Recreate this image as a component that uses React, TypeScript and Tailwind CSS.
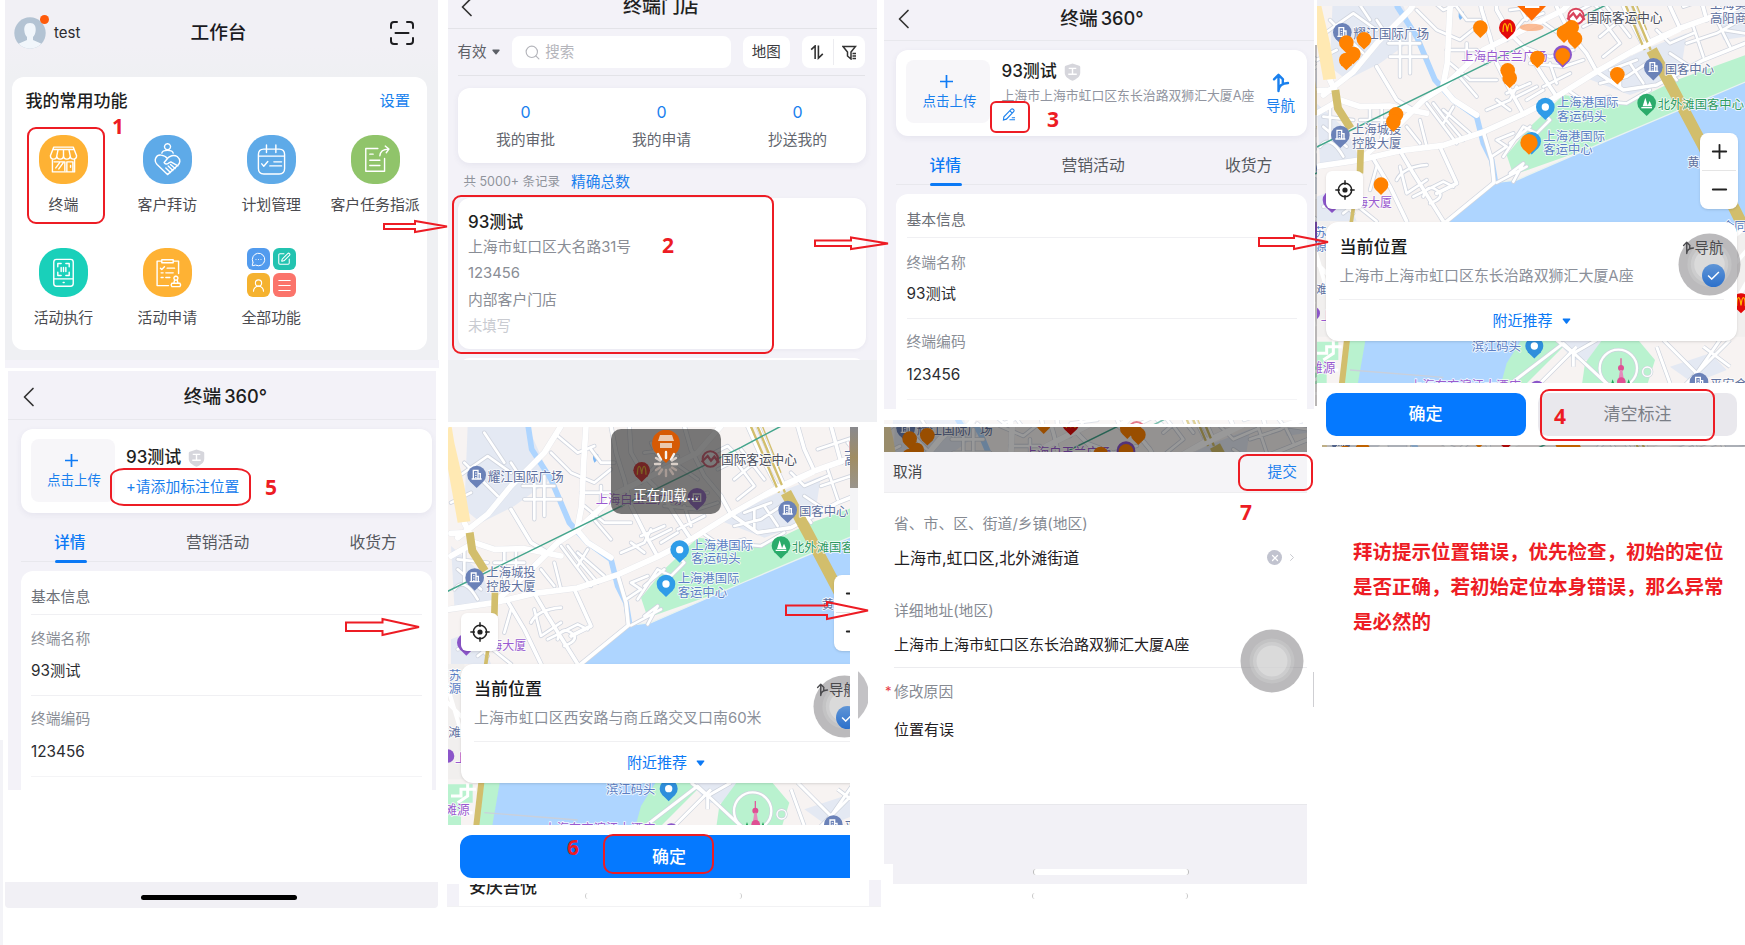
import React from "react";
import { ChevronLeft, ChevronRight, MessageCircleMore, Menu, Plus, Minus, Search, SquarePen, UserRound, X } from "lucide-react";

const FONT = "font-['Inter','Noto_Sans_CJK_SC',sans-serif]";

/* ---------- shared glyphs ---------- */

function NavGlyph({ className }: { className: string }) {
  return (
    <svg viewBox="0 0 18 20" fill="none" stroke="currentColor" strokeLinecap="round" strokeLinejoin="round" className={className}>
      <path d="M6.500 18V2M2 6.300L6.500 1.800L11 6.300M6.500 17.500C6.800 13 9.500 10.300 16 10M10.800 7.500V10.500" />
    </svg>
  );
}

function Shield({ className }: { className: string }) {
  return (
    <svg viewBox="0 0 18 20" preserveAspectRatio="none" className={className}>
      <path d="M9 0.5L16.2 3Q17.2 3.4 17.2 4.5V11C17.2 15 13 18 9 19.6C5 18 .8 15 .8 11V4.5Q.8 3.4 1.8 3Z" fill="#d6d6dc" />
      <path d="M5 6H13M9 6V12.5M4.5 12.5H13.5" stroke="#fff" strokeWidth="1.5" fill="none" />
    </svg>
  );
}

function Caret({ className }: { className: string }) {
  return (
    <svg viewBox="0 0 10 7" className={className}>
      <path d="M1 .5H9Q10 .8 9.3 1.8L5.7 6.3Q5 7 4.3 6.3L.7 1.8Q0 .8 1 .5Z" fill="currentColor" />
    </svg>
  );
}

function Back() {
  return (
    <svg viewBox="0 0 22 22" fill="none" stroke="#333" strokeWidth="1.7" strokeLinecap="round" strokeLinejoin="round" className="h-[22px] w-[22px]">
      <path d="M16 2.500L7.500 11L16 19.500" />
    </svg>
  );
}

function Assistive({ className }: { className: string }) {
  return (
    <svg viewBox="0 0 64 64" className={className}>
      <circle cx="32" cy="32" r="31.5" fill="#8a888c" fillOpacity=".58" />
      <circle cx="32" cy="32" r="22.5" fill="#fff" fillOpacity=".13" />
      <circle cx="32" cy="32" r="19" fill="#fff" fillOpacity=".18" />
      <circle cx="32" cy="32" r="15.5" fill="#fff" fillOpacity=".26" />
    </svg>
  );
}

/* ---------- map ---------- */

const MAJOR = [
  "M0 502L150 480L270 452L400 436L520 396L640 342L740 290L860 215L1000 135L1110 85L1305 15",
  "M40 285L130 215L200 130L300 30L350 -50",
  "M150 480L250 390L340 300L398 262L412 190L418 60L425 -50",
  "M60 240L75 270L20 272",
  "M500 345L430 300L398 262L520 150L640 90L760 30L830 -50",
  "M20 340L90 300L150 320L240 318L350 340",
];
const MID = [
  "M640 342L600 270L560 190L540 110L515 30L500 -50",
  "M740 290L700 230L650 150L600 100L560 30L555 -50",
  "M520 396L545 480L552 548L410 664L300 760",
  "M200 200L260 300L310 330",
  "M270 452L310 520L360 600L400 664",
  "M190 476L240 560L290 664",
  "M390 440L440 550L380 580",
  "M860 215L830 160L780 100L740 20L720 -50",
  "M1000 135L950 40L910 -50M1020 130L975 30L940 -50",
  "M1305 130L1180 180L1040 255L940 270L860 215",
  "M1110 85L1080 20L1060 -50M1190 60L1160 -50",
];
const MINOR = [
  "M270 120V230M300 100V220M235 130H330M240 170H350M200 60L240 120",
  "M320 30L380 90L450 120L500 80M440 20L470 60L510 60M340 -20L400 30L450 10",
  "M410 150H500L530 190M420 190L480 240L560 240M440 220L500 290M470 130V200",
  "M330 360L350 440M290 380L330 430M370 310L400 350L460 420M400 330L480 400M430 320L400 370M350 310L440 430",
  "M560 300L600 330M530 330L600 300L620 260M590 280L660 250M620 290L680 260M650 300L700 270",
  "M545 470L590 440L560 420L610 400M580 470L640 380L680 400L720 360L690 330M600 430L660 380",
  "M600 520L640 490L610 545M560 548L650 500",
  "M260 540Q280 500 350 495M270 500L290 580L350 540M310 590L400 545L430 560M340 590Q350 550 380 570T360 610",
  "M60 560L130 640M40 620L120 600L200 664M200 500L180 570",
  "M40 350L130 360M40 380L110 440M60 320V420M180 320V450M215 320V420M150 360H240",
  "M640 140L720 170L790 150M660 190L760 200L820 180M690 60L760 110M590 120L640 60L700 40M700 260L780 220M720 190L740 250",
  "M870 50L930 130L880 170M890 20L960 110M930 60L870 110M960 190L1000 250M900 210L980 180M870 250L950 230L1010 190M930 260V200M1060 190L1100 240M1080 160L1140 200",
  "M1040 90L1080 130L1150 100M1150 80L1180 170M1120 20L1240 -20M1220 60L1260 140M1130 130L1220 100L1290 60M1210 0L1250 50M1240 90L1305 100",
  "M60 60L160 160M30 110L130 40L200 90M120 -30L180 60M20 180L80 150",
  "M100 470Q60 400 30 440M100 640L150 600",
  "M780 275L830 310L900 290M830 300L950 310L1020 270",
  "M790 40L850 10L900 60M820 80L880 50M600 30L680 20M620 0L650 60",
];

type LabelProps = { x: number; y: number; fill: string; children: string; size?: number };
function Label({ x, y, fill, children, size = 37 }: LabelProps) {
  return (
    <text x={x} y={y} fill={fill} fontSize={size} stroke="#fff" strokeWidth="5" strokeOpacity=".85" paintOrder="stroke" strokeLinejoin="round">
      {children}
    </text>
  );
}

function Drop({ x, y, r, fill, children }: { x: number; y: number; r: number; fill: string; children?: React.ReactNode }) {
  return (
    <g transform={`translate(${x} ${y})`}>
      <path d={`M0 ${r * 1.4}L${-r * 0.75} ${r * 0.66}H${r * 0.75}Z`} fill={fill} />
      <circle r={r} fill={fill} />
      {children}
    </g>
  );
}

function BuildingPin({ x, y }: { x: number; y: number }) {
  return (
    <Drop x={x} y={y} r={28} fill="#6b82b8">
      <path d="M-10 12V-14H4V12M4 -4H11V12M-15 12H15" fill="none" stroke="#fff" strokeWidth="4" />
      <path d="M-5 -6H0M-5 1H0M-5 8H0" stroke="#fff" strokeWidth="3" />
    </Drop>
  );
}

function McPin({ x, y }: { x: number; y: number }) {
  return (
    <Drop x={x} y={y} r={25} fill="#e30a0a">
      <path d="M-13 13C-12 -20 -4 -20 0 11C4 -20 12 -20 13 13" fill="none" stroke="#ffb400" strokeWidth="4" />
    </Drop>
  );
}

const ORANGE_PINS: [number, number][] = [
  [511, 83], [162, 118], [130, 162], [109, 128], [109, 180], [593, 211], [599, 234], [682, 174],
  [922, 223], [258, 343], [250, 365], [213, 554], [785, 82], [795, 116], [762, 98], [775, 90], [758, 166],
];

const BLUE = "#5b7fc4";
const SLATE = "#5f719f";
const PURPLE = "#9a5bd0";

function Labels() {
  return (
    <g>
      <Label x={130} y={115} fill={SLATE} size={38}>耀江国际广场</Label>
      <Label x={126} y={402} fill={SLATE}>上海城投</Label>
      <Label x={126} y={444} fill={SLATE}>控股大厦</Label>
      <Label x={1064} y={221} fill={SLATE}>国客中心</Label>
      <Label x={454} y={183} fill={PURPLE}>上海白玉兰广场</Label>
      <Label x={830} y={65} fill="#4a4f5e" size={38}>国际客运中心</Label>
      <Label x={1200} y={28} fill={SLATE}>上海实</Label>
      <Label x={1200} y={68} fill={SLATE}>高阳商</Label>
      <Label x={741} y={321} fill={BLUE}>上海港国际</Label>
      <Label x={741} y={362} fill={BLUE}>客运码头</Label>
      <Label x={700} y={422} fill={BLUE}>上海港国际</Label>
      <Label x={700} y={463} fill={BLUE}>客运中心</Label>
      <Label x={1043} y={328} fill="#2d9a62">北外滩国客中心</Label>
      <Label x={1132} y={500} fill={SLATE}>黄</Label>
      <Label x={138} y={622} fill={PURPLE} size={36}>海大厦</Label>
      <Label x={-24} y={712} fill={BLUE}>嘉苏</Label>
      <Label x={-24} y={752} fill={BLUE}>滩源</Label>
      <Label x={12} y={882} fill={SLATE}>滩</Label>
      <Label x={32} y={962} fill={PURPLE}>上</Label>
      <Label x={1236} y={692} fill={BLUE}>合同</Label>
      <Label x={0} y={1115} fill={PURPLE} size={38}>滩源</Label>
      <Label x={485} y={1053} fill={BLUE}>滨江码头</Label>
      <Label x={300} y={1170} fill={PURPLE}>上海东方滨江大酒店</Label>
      <Label x={1200} y={1166} fill={SLATE}>平安金</Label>
    </g>
  );
}

function CityMap({ viewBox, className, pins = false, labels = true }: { viewBox: string; className: string; pins?: boolean; labels?: boolean }) {
  return (
    <svg viewBox={viewBox} preserveAspectRatio="none" className={className}>
      <rect x="-50" y="-100" width="1500" height="1400" fill="#f7f3f2" />
      <g fill="#e4e9f3">
        <path d="M70 -50H250L320 110L210 190L110 240L60 200Z" />
        <path d="M830 235L1000 150L1130 100L1110 230L960 285Z" />
        <path d="M20 310L110 390L150 480L30 490Z" />
        <path d="M20 590L100 560L140 664H20ZM1210 40L1305 20V110L1240 120Z" />
      </g>
      <path d="M590 465L660 380L760 285L800 290L950 312L1100 240L1320 160V260L880 430L610 525Z" fill="#b9f2cf" />
      <path d="M250 -60L262 20L320 110L375 240L430 300L500 350L520 430L545 480L560 570" fill="none" stroke="#aed5ff" strokeWidth="17" />
      <path d="M400 670L552 548L620 540L900 418L1320 240V1023H400Z" fill="#aed5ff" />
      <path d="M552 548L620 540L900 418L1320 240" fill="none" stroke="#e9f3f0" strokeWidth="4" />
      <path d="M446 38Q454 30 462 36Q462 52 450 60Q444 50 446 38Z" fill="#7db8f5" />
      <g fill="none" strokeLinejoin="round" strokeLinecap="round">
        <g stroke="#d0d5df">
          {MINOR.map((d) => <path key={d} d={d} strokeWidth="13" />)}
          {MID.map((d) => <path key={d} d={d} strokeWidth="15" />)}
          {MAJOR.map((d) => <path key={d} d={d} strokeWidth="19" strokeOpacity=".5" />)}
        </g>
        <g stroke="#fff">
          {MINOR.map((d) => <path key={d} d={d} strokeWidth="8" />)}
          {MID.map((d) => <path key={d} d={d} strokeWidth="11" />)}
          {MAJOR.map((d) => <path key={d} d={d} strokeWidth="17" />)}
        </g>
      </g>
      <path d="M20 -60L-5 -10L40 240L78 236L60 130L30 0Z" fill="#ffe9b3" />
      <g fill="none" stroke="#d2be6c">
        <path d="M76 270L84 325L122 385" strokeWidth="24" />
        <path d="M152 445L150 520" strokeWidth="20" />
        <path d="M132 610L122 680" strokeWidth="11" />
        <path d="M1025 150L1090 270L1175 430L1300 680" strokeWidth="34" />
        <path d="M915 -60L1004 150M935 -60L1022 150" strokeWidth="7" />
        <path d="M950 -60L1010 90" strokeWidth="4" />
      </g>
      <path d="M960 160L1110 88" stroke="#fff" strokeWidth="14" />
      <path d="M10 446L890 14L1030 -60" fill="none" stroke="#43a58c" strokeWidth="4.5" />

      {/* south bank */}
      <path d="M0 664H60V1023H0ZM1240 670H1320V1150H1240Z" fill="#f1efee" />
      <path d="M0 770L60 830M0 700L60 900M1260 720L1320 670M1250 820L1320 740M1250 950L1320 830" stroke="#fff" strokeWidth="12" />
      <rect x="0" y="1010" width="1320" height="190" fill="#f7f3f2" />
      <path d="M150 1010H700L560 1200H120Z" fill="#aed5ff" />
      <path d="M0 1025H85V1080H50V1160H0Z" fill="#b9f2cf" />
      <path d="M20 1060H50V1040H95M20 1110H85M70 1020V1060L40 1080" stroke="#fff" strokeWidth="9" fill="none" />
      <path d="M110 1010H168L135 1200H90Z" fill="#b9f2cf" />
      <path d="M112 1010L90 1200" stroke="#d2be6c" strokeWidth="18" />
      <path d="M120 1110L400 1132" stroke="#c9d0dc" strokeWidth="4" />
      <path d="M560 1200L590 1090L640 1010H790L600 1200Z" fill="#b9f2cf" />
      <path d="M730 1010H900L850 1080H790ZM1080 1100L1200 1060L1250 1110L1150 1150Z" fill="#e4e9f3" />
      <path d="M815 1160L825 1090L880 1015H980L1035 1080L1010 1160Z" fill="#b9f2cf" />
      <g fill="none" strokeLinejoin="round">
        <g stroke="#cdd3dd">
          <path d="M590 1160L760 1030L900 1160M680 1160L800 1040M740 1020L790 1060L860 1020M790 1060V1100M1040 1040L1080 1150M1060 1020L1160 1120L1230 1020M1120 1160L1260 1020M1180 1040L1260 1100" strokeWidth="13" />
          <circle cx="925" cy="1105" r="56" strokeWidth="11" />
          <circle cx="1012" cy="1115" r="14" strokeWidth="8" />
        </g>
        <g stroke="#fff">
          <path d="M590 1160L760 1030L900 1160M680 1160L800 1040M740 1020L790 1060L860 1020M790 1060V1100M1040 1040L1080 1150M1060 1020L1160 1120L1230 1020M1120 1160L1260 1020M1180 1040L1260 1100" strokeWidth="9" />
          <circle cx="925" cy="1105" r="56" strokeWidth="7" />
          <circle cx="1012" cy="1115" r="14" strokeWidth="4" />
        </g>
      </g>
      <path d="M933 1075V1110" stroke="#e05c9d" strokeWidth="4" />
      <circle cx="933" cy="1104" r="9" fill="#df4f93" />
      <path d="M930 1110H937L941 1135H926Z" fill="#e58abb" />
      <circle cx="934" cy="1145" r="13" fill="#df4f93" />
      <path d="M900 1160L908 1138L916 1160M948 1160L956 1138L964 1160" fill="#22a35a" />

      <BuildingPin x={97} y={97} />
      <BuildingPin x={91} y={405} />
      <BuildingPin x={1030} y={202} />
      <BuildingPin x={1167} y={1146} />
      <circle cx="798" cy="49" r="23" fill="#fff" stroke="#d9435c" strokeWidth="6" />
      <path d="M772 58L790 40L800 54L810 42L824 60" fill="none" stroke="#d9435c" strokeWidth="7" />
      {labels && <Labels />}
      <Drop x={706} y={321} r={28} fill="#2f9ce8"><circle r="11" fill="#fff" /></Drop>
      <Drop x={665} y={424} r={28} fill="#2f9ce8"><circle r="11" fill="#fff" /></Drop>
      <Drop x={1010} y={309} r={28} fill="#2bab6b">
        <path d="M-12 10L-4 -16L4 10ZM2 10L9 -6L16 10Z" fill="#fff" />
        <path d="M-16 14H16" stroke="#fff" strokeWidth="4" />
      </Drop>
      <Drop x={758} y={164} r={28} fill="#8b55c9">
        <path d="M-11 -10H11V12H-11ZM-5 -4Q0 6 5 -4" fill="none" stroke="#fff" strokeWidth="4" />
      </Drop>
      <Drop x={66} y={600} r={28} fill="#8b55c9" />
      <circle cx="10" cy="940" r="20" fill="#8b55c9" />
      <Drop x={673} y={1038} r={27} fill="#2f8fdc"><circle r="11" fill="#fff" /></Drop>
      <circle cx="681" cy="1164" r="22" fill="#8b55c9" />
      <McPin x={592} y={83} />

      {pins && (
        <g>
          <ellipse cx="665" cy="82" rx="36" ry="11" fill="#f9a06a" fillOpacity=".7" />
          <path d="M665 62L622 18Q610 0 625 -20H705Q720 0 708 18Z" fill="#ff6a00" />
          <path d="M645 10H688V24H645Z" fill="#fff" />
          {ORANGE_PINS.map(([x, y]) => <Drop key={`${x}-${y}`} x={x} y={y} r={22} fill="#ff8200" />)}
          <Drop x={657} y={428} r={26} fill="#ff8200" />
          <McPin x={1293} y={905} />
        </g>
      )}
    </svg>
  );
}

function LocateButton({ className }: { className: string }) {
  return (
    <div className={`absolute flex h-[38px] w-[37px] items-center justify-center rounded-md bg-white text-[#222] shadow-sm ${className}`}>
      <svg viewBox="0 0 20 20" fill="none" stroke="currentColor" strokeWidth="1.5" className="h-5 w-5">
        <circle cx="10" cy="10" r="6.7" />
        <circle cx="10" cy="10" r="2.6" fill="currentColor" stroke="none" />
        <path d="M10 .3V5M10 15v4.7M.3 10H5M15 10h4.7" />
      </svg>
    </div>
  );
}

function ZoomControl({ className }: { className: string }) {
  return (
    <div className={`absolute flex h-[76px] w-[38px] flex-col items-center rounded-lg bg-white text-[#222] shadow ${className}`}>
      <div className="flex h-[37px] items-center"><Plus className="h-[23px] w-[23px]" strokeWidth={1.9} /></div>
      <div className="h-px w-[34px] bg-[#e5e5e5]" />
      <div className="flex h-[37px] items-center"><Minus className="h-[23px] w-[23px]" strokeWidth={1.9} /></div>
    </div>
  );
}

function LocationCard({ address, className }: { address: string; className: string }) {
  return (
    <div className={`absolute h-[119px] w-[411px] rounded-xl bg-white shadow ${className}`}>
      <Assistive className="absolute top-[11px] right-[-4px] h-[63px] w-[63px]" />
      <div className="relative flex h-[52px] items-center justify-between px-[13.5px]">
        <span className="text-[17px] font-medium text-[#17181a]">当前位置</span>
        <span className="flex items-center text-[14.5px] text-[#4a4a4d]">
          <NavGlyph className="h-[14px] w-[13px] stroke-2" />导航
        </span>
      </div>
      <div className="flex h-[5px] items-center px-[13.5px] text-[14.95px] whitespace-nowrap text-[#8b909a]">{address}</div>
      <div className="mx-[13px] mt-[20px] h-px bg-[#f0f0f2]" />
      <div className="flex h-[43px] items-center justify-center gap-[9px] text-[15px] text-[#0b79f5]">
        附近推荐<Caret className="h-[6px] w-[9px]" />
      </div>
      <div className="absolute top-[42px] right-[12.5px] flex h-[23px] w-[23px] items-center justify-center rounded-full bg-linear-to-b from-[#5f95d6] to-[#2b70cb]">
        <svg viewBox="0 0 14 10" fill="none" stroke="#fff" strokeWidth="1.6" className="h-[9px] w-[13px]"><path d="M1 5L5 9L13 1" /></svg>
      </div>
    </div>
  );
}

/* ---------- workbench ---------- */

const ART: Record<string, React.ReactNode> = {
  store: <path d="M34 62L44 36H102L112 62M44 43H102M57 43L53 62M73 43V62M89 43L93 62M34 62c0 13 19 13 19 0c0 13 20 13 20 0c0 13 20 13 20 0c0 13 19 13 19 0M40 74V110H106V74M83 110V80H101V110M50 98l11-15M59 101l13-18M94 91v5M45 80H77V106" />,
  shake: <path d="M73 26a9 9 0 1 0 .1 0M56 54c2-11 32-11 34 0M73 118L42 88C30 74 40 58 54 60C64 61 70 66 73 70C78 62 92 58 102 64C114 74 110 84 104 90ZM73 70L63 82q5 8 13 2l7-4L104 92M68 98l14 14M75 92l14 14M82 88l14 12" />,
  plan: <path d="M50 42H96Q112 42 112 58V100Q112 116 96 116H50Q34 116 34 100V58Q34 42 50 42ZM34 63H112M58 30V52M86 30V52M44 86l6 7L62 79M80 80H103M68 92H103" />,
  assign: <path d="M80 40H44V108H100V70M56 57H66M56 75H86M56 91H86M86 62C87 50 94 42 112 42M102 33L113 42L105 53" />,
  phone: <path d="M52 34H94Q102 34 102 42V106Q102 114 94 114H52Q44 114 44 106V42Q44 34 52 34ZM44 92H102M56 56V46H66M80 46H90V56M90 72V82H80M66 82H56V72M66 58V70M73 58V70M80 58V70M72 103h3" />,
  apply: <path d="M54 39H42V112H76M92 39H106V76M56 35H90V44H56ZM52 60l4 4l8-8M72 60H94M54 74H60M68 74H90M54 88H60M68 88H80M98 84a6 6 0 1 0 .1 0M94 96L92 104M102 96L104 104M86 105H110Q114 110 110 115H86Q82 110 86 105Z" />,
};

function AppIcon({ art, bg }: { art: string; bg: string }) {
  return (
    <div className={`h-[49px] w-[49px] rounded-[22px] ${bg}`}>
      <svg viewBox="0 0 146 146" fill="none" stroke="#fff" strokeWidth="4.2" strokeLinecap="round" strokeLinejoin="round">{ART[art]}</svg>
    </div>
  );
}

function AllIcon() {
  const cell = "flex items-center justify-center rounded-[6px] text-white";
  return (
    <div className="grid h-[49px] w-[49px] grid-cols-2 gap-[3px]">
      <div className={`${cell} bg-[#529bee]`}><MessageCircleMore className="h-[15px] w-[15px]" strokeWidth={1.6} /></div>
      <div className={`${cell} bg-[#23c3b0]`}><SquarePen className="h-[14px] w-[14px]" strokeWidth={1.8} /></div>
      <div className={`${cell} bg-[#f5b22f]`}><UserRound className="h-[15px] w-[15px]" strokeWidth={1.8} /></div>
      <div className={`${cell} bg-[#fb746b]`}><Menu className="h-[17px] w-[17px]" strokeWidth={1.6} /></div>
    </div>
  );
}

const APPS = [
  { label: "终端", icon: <AppIcon art="store" bg="bg-[#feb234]" /> },
  { label: "客户拜访", icon: <AppIcon art="shake" bg="bg-[#5eaae8]" /> },
  { label: "计划管理", icon: <AppIcon art="plan" bg="bg-[#5eaae8]" /> },
  { label: "客户任务指派", icon: <AppIcon art="assign" bg="bg-[#90c46a]" /> },
  { label: "活动执行", icon: <AppIcon art="phone" bg="bg-[#19d0ba]" /> },
  { label: "活动申请", icon: <AppIcon art="apply" bg="bg-[#feb234]" /> },
  { label: "全部功能", icon: <AllIcon /> },
];

function Workbench() {
  return (
    <section className="ml-[5px] h-[360px] w-[433px] bg-[#eff0f3]">
      <header className="grid h-[77px] grid-cols-3 items-start bg-linear-to-b from-[#f1f0f5] from-60% to-[#eff0f3] px-[9px] pt-[11px]">
        <div className="flex h-11 items-center gap-[8px]">
          <div className="relative">
            <svg viewBox="0 0 32 32" className="h-8 w-8">
              <defs><clipPath id="avatar"><circle cx="16" cy="16" r="15.7" /></clipPath></defs>
              <g clipPath="url(#avatar)">
                <rect width="32" height="32" fill="#b3c3d3" />
                <path d="M16 6C11.5 6 10 9.5 10.3 13.5C10.5 17 12 19 13 20V23L5 26.500V32H27V26.500L19 23V20C20 19 21.5 17 21.700 13.500C22 9.500 20.500 6 16 6Z" fill="#f1f6fb" />
              </g>
            </svg>
            <div className="absolute -top-[2px] -right-[3px] h-[9px] w-[9px] rounded-full bg-[#ff5b0b]" />
          </div>
          <span className="pt-px text-[15px] text-[#2b2b2f]">test</span>
        </div>
        <h1 className="flex h-11 items-center justify-center pt-px pr-[6px] text-[18.7px] font-medium text-[#1a1a1e]">工作台</h1>
        <div className="flex h-11 items-center justify-end pr-[15px]">
          <svg viewBox="0 0 24 24" fill="none" stroke="#1d1d20" strokeWidth="2" strokeLinecap="round" className="h-6 w-6">
            <path d="M1 7V4Q1 1 4 1H7M17 1H20Q23 1 23 4V7M23 17V20Q23 23 20 23H17M7 23H4Q1 23 1 20V17M5.500 12H18.500" />
          </svg>
        </div>
      </header>
      <div className="ml-[7px] h-[273px] w-[415px] rounded-xl bg-white">
        <div className="flex h-[48px] items-center justify-between pt-px pr-[17px] pl-[13.5px]">
          <h2 className="text-[17px] font-medium text-[#1d1e21]">我的常用功能</h2>
          <a className="text-[15.3px] text-[#1681ee]">设置</a>
        </div>
        <div className="-ml-[0.5px] grid grid-cols-4 pt-[10px]">
          {APPS.map((a) => (
            <div key={a.label} className="flex h-[113px] flex-col items-center">
              {a.icon}
              <span className="mt-[10px] text-[14.9px] leading-[23px] whitespace-nowrap text-[#4b4b50]">{a.label}</span>
            </div>
          ))}
        </div>
      </div>
    </section>
  );
}

/* ---------- store list ---------- */

function StoreList() {
  return (
    <section className="ml-[0.5px] flex h-[422px] w-[429px] flex-col bg-[#eff0f3]">
      <div className="h-[360px] overflow-hidden bg-[#f3f2f8]">
        <header className="relative h-[29px] overflow-hidden border-b border-[#e3e3e8]">
          <div className="-mt-[8px] grid h-[29px] grid-cols-3 items-center pr-[9px] pl-[7px]">
            <Back />
            <h1 className="text-center text-[19px] leading-none font-medium whitespace-nowrap text-[#222]">终端门店</h1>
          </div>
        </header>
        <div className="mr-[12px] ml-[10px] flex h-[47px] items-center border-b border-[#e3e3e8]">
          <div className="flex w-[55px] items-center gap-[5px] text-[14.5px] whitespace-nowrap text-[#5d6067]">有效<Caret className="h-[6px] w-[8px]" /></div>
          <div className="flex h-8 w-[219px] items-center gap-[4px] rounded-lg bg-white pl-[12px] text-[14.5px] text-[#b4b5bb]">
            <Search className="h-[17px] w-[17px]" strokeWidth={1.6} />搜索
          </div>
          <div className="ml-[12px] flex h-8 w-[47px] items-center justify-center rounded-lg bg-white text-[14.5px] text-[#3b3c40]">地图</div>
          <div className="ml-[12px] flex h-8 w-[63px] items-center rounded-lg bg-white text-[#333]">
            <div className="flex flex-1 justify-center">
              <svg viewBox="0 0 14 16" fill="none" stroke="currentColor" strokeWidth="1.7" className="h-[15px] w-[14px]">
                <path d="M.8 5L5 1V15M8.500 .5V14L13.200 9.500" />
              </svg>
            </div>
            <div className="h-[26px] w-px bg-[#ececf0]" />
            <div className="flex flex-1 justify-center">
              <svg viewBox="0 0 15 15" fill="none" stroke="currentColor" strokeWidth="1.5" className="h-[15px] w-[15px]">
                <path d="M1 1.500H13.500L9 7V14L5.500 11V7ZM10.500 8.500H14M10.500 11H14M10.500 13.500H14" />
              </svg>
            </div>
          </div>
        </div>
        <div className="mt-[12px] ml-[10px] grid h-[75px] w-[408px] grid-cols-3 rounded-xl bg-white shadow-[0_2px_6px_rgba(60,60,120,0.07)]">
          {["我的审批", "我的申请", "抄送我的"].map((t) => (
            <div key={t} className="flex flex-col items-center pt-[11px]">
              <span className="text-[16px] leading-[26px] text-[#1a80ee]">0</span>
              <span className="mt-[3px] text-[14.8px] leading-[24px] text-[#62666e]">{t}</span>
            </div>
          ))}
        </div>
        <div className="flex h-[35px] items-center gap-[11px] pt-[3px] pl-[16px]">
          <span className="text-[12.5px] text-[#90949c]">共 5000+ 条记录</span>
          <a className="text-[14.7px] text-[#1a80ee]">精确总数</a>
        </div>
        <article className="ml-[10px] flex h-[151px] w-[408px] flex-col rounded-xl bg-white pl-[10.500px] text-[14.8px] text-[#898d95] shadow-[0_1px_4px_rgba(60,60,120,0.06)]">
          <h2 className="mt-[12px] text-[17px] leading-[25px] font-medium text-[#1d1e21]">93测试</h2>
          <p className="-mt-px leading-[26px]">上海市虹口区大名路31号</p>
          <p className="leading-[27px]">123456</p>
          <p className="leading-[26px]">内部客户门店</p>
          <p className="leading-[26px] text-[14.3px] text-[#c9cbd1]">未填写</p>
        </article>
        <div className="mt-[9px] ml-[10px] h-4 w-[408px] rounded-t-xl bg-white" />
      </div>
    </section>
  );
}

/* ---------- terminal detail ---------- */

type DetailCls = { root: string; header: string; card: string; title: string; indent: string };

function Detail({ c, children, nav }: { c: DetailCls; children: React.ReactNode; nav?: boolean }) {
  return (
    <section className={`overflow-hidden bg-[#f3f2f8] ${c.root}`}>
      <header className={`grid grid-cols-3 items-center border-b border-[#e8e8ed] pr-[2px] ${c.header}`}>
        <Back />
        <h1 className="text-center text-[18.7px] font-medium whitespace-nowrap text-[#1d1e21]">终端<span className="ml-[3px] text-[18.2px]">360°</span></h1>
      </header>
      <div className={`flex w-[411px] rounded-xl bg-white pl-[10px] shadow-[0_2px_6px_rgba(60,60,120,0.07)] ${c.card} ${c.indent}`}>
        <div className="mt-[10px] flex h-[63px] w-[84px] shrink-0 flex-col items-center rounded-lg bg-[#f7f6f9] pt-[15px] pr-[4px] pl-px text-[13.5px] text-[#1a80ee]">
          <svg viewBox="0 0 13 13" className="h-[13px] w-[13px]" stroke="#0f7bf5" strokeWidth="1.7"><path d="M6.500 0V13M0 6.500H13" /></svg>
          <span className="mt-[2px] ml-[6px] leading-[22px]">点击上传</span>
        </div>
        <div className={`ml-[11.5px] flex w-[256px] flex-col ${c.title}`}>
          <div className="flex h-[24px] items-center gap-[7px] text-[17px] font-medium text-[#1d1e21]">93测试<Shield className="h-[18px] w-[17px]" /></div>
          {children}
        </div>
        {nav && (
          <div className="ml-[3px] flex w-[40px] flex-col items-center pt-[23px] text-[14.5px] text-[#1a80ee]">
            <NavGlyph className="h-[20px] w-[18px] stroke-[2.4]" />
            <span className="mt-[3px] leading-[20px]">导航</span>
          </div>
        )}
      </div>
      <nav className={`relative mt-[16px] h-[33px] w-[411px] border-b border-[#e8e8ed] pt-[2px] text-[15.8px] text-[#55585e] ${c.indent}`}>
        <div className="flex items-center pl-[33.500px]">
          <div className="w-[132px] font-medium text-[#0b79f5]">详情</div>
          <div className="w-[163.500px]">营销活动</div>
          <div>收货方</div>
        </div>
        <div className="absolute -bottom-[2px] left-[34px] h-[3px] w-[32px] rounded-full bg-[#0b79f5]" />
      </nav>
      <div className={`mt-[9px] flex h-[300px] w-[411px] flex-col rounded-t-xl bg-white pr-[10px] pl-[10.5px] text-[14.8px] text-[#8b8f97] ${c.indent}`}>
        <div className="flex h-[44px] items-center border-b border-[#f0f0f3] pt-[10px] text-[#6c7077]">基本信息</div>
        <div className="flex h-[50px] items-center">终端名称</div>
        <div className="flex h-[31px] items-center border-b border-[#f0f0f3] pb-[17px] text-[15.3px] text-[#2b2c30]">93测试</div>
        <div className="flex h-[47px] items-center">终端编码</div>
        <div className="flex h-[34px] items-center border-b border-[#f4f4f6] pb-[14px] text-[15.3px] text-[#2b2c30]">123456</div>
      </div>
    </section>
  );
}

const TOP_DETAIL: DetailCls = {
  root: "h-[409px] w-[430px]",
  header: "h-[41px] pb-[2px] pl-[8px]",
  card: "mt-[9px] h-[86px]",
  title: "pt-[10px]",
  indent: "ml-[12px]",
};

const LOW_DETAIL: DetailCls = {
  root: "ml-[8px] mt-[3px] h-[419px] w-[428px]",
  header: "h-[49px] pt-[4px] pl-[9px]",
  card: "mt-[8.5px] h-[84px]",
  title: "pt-[17px]",
  indent: "ml-[12.5px]",
};

/* ---------- address form ---------- */

function AddressForm() {
  return (
    <section className="w-[423px]">
      <div className="relative h-[25px]">
        <CityMap viewBox="32 93 1269 75" className="h-[25px] w-[423px]" pins />
        <div className="absolute inset-0 bg-black/40" />
      </div>
      <div className="flex h-[41px] items-center justify-between border-b border-[#eeeef0] bg-[#f5f4f7] pr-[10px] pl-[9px] text-[14.7px] text-[#45464a]">
        <span>取消</span><span className="text-[#1a80ee]">提交</span>
      </div>
      <div className="flex h-[311px] flex-col pl-[10px] text-[14.8px] text-[#868a92]">
        <div className="flex h-[62px] items-center">省、市、区、街道/乡镇(地区)</div>
        <div className="flex h-[5px] items-center justify-between pr-[9px] text-[16px] text-[#1f2023]">
          上海市,虹口区,北外滩街道
          <span className="flex items-center gap-[4px]">
            <span className="flex h-[15px] w-[15px] items-center justify-center rounded-full bg-[#c1c3cf] text-white"><X className="h-[10px] w-[10px]" strokeWidth={3} /></span>
            <ChevronRight className="h-[17px] w-[12px] text-[#c3c4cb]" strokeWidth={1.8} />
          </span>
        </div>
        <div className="flex h-[102px] items-center">详细地址(地区)</div>
        <div className="-mt-[34px] flex h-[34px] items-center text-[15px] text-[#1f2023]">上海市上海市虹口区东长治路双狮汇大厦A座</div>
        <div className="mt-[5px] h-px bg-[#ececef]" />
        <div className="-ml-[9px] flex h-[48px] items-center"><span className="w-[9px] text-[13px] text-[#e83b46]">*</span>修改原因</div>
        <div className="flex h-[28px] items-center text-[15px] text-[#1f2023]">位置有误</div>
      </div>
      <div className="flex h-[60px] border-t border-[#e8e8ec] bg-[#f2f1f6]" />
      <div className="ml-[9px] h-[20px] bg-[#f2f1f6] pt-[5px] pl-[140px]">
        <div className="h-[6px] w-[156px] rounded-full border-x border-[#bbb] bg-white" />
      </div>
      <div className="mt-[9px] ml-[148px] h-[6px] w-[156px] rounded-full border-x border-[#c8c8c8]" />
    </section>
  );
}

/* ---------- annotations ---------- */

const BOXES = [
  "left-[27px] top-[127px] h-[97px] w-[78px] rounded-[9px]",
  "left-[452px] top-[195px] h-[159px] w-[322px] rounded-[9px]",
  "left-[990px] top-[101px] h-[32px] w-[40px] rounded-[6px]",
  "left-[1540px] top-[389px] h-[52px] w-[175px] rounded-[9px]",
  "left-[110px] top-[467.5px] h-[38.5px] w-[141px] rounded-[14px/9px]",
  "left-[603px] top-[834px] h-[40px] w-[111px] rounded-[10px]",
  "left-[1238px] top-[454px] h-[37px] w-[75px] rounded-[9px]",
];

const DIGITS = [
  "left-[112px] top-[112px]",
  "left-[662px] top-[231px]",
  "left-[1047px] top-[105px]",
  "left-[1554px] top-[402px]",
  "left-[265px] top-[473px]",
  "left-[567px] top-[833px]",
  "left-[1240px] top-[498px]",
];

function Annotations() {
  return (
    <div className="pointer-events-none absolute inset-0">
      {BOXES.map((b) => <div key={b} className={`absolute border-[2.5px] border-[#ed1c24] ${b}`} />)}
      {DIGITS.map((d, i) => (
        <div key={d} className={`absolute font-['Noto_Sans',sans-serif] text-[21px] leading-[28px] font-bold text-[#ed1c24] ${d}`}>{i + 1}</div>
      ))}
      <svg viewBox="0 0 1745 945" className="absolute inset-0 h-full w-full" fill="none" stroke="#ed1c24" strokeWidth="2">
        <path d="M384 224H415V221L447 226.500L415 232V229H384Z" />
        <path d="M815 240.500H851V237.500L888 243.500L851 249V246H815Z" />
        <path d="M1259 238H1294V235.500L1328 242L1294 249V246H1259Z" />
        <path d="M346 622.500H382.500V619L419 627L382.500 635V631H346Z" />
        <path d="M786 605.500H827V602L868 610.500L827 619V615H786Z" />
      </svg>
    </div>
  );
}

export default function App() {
  return (
    <main className={`relative flex h-[945px] w-[1745px] overflow-hidden bg-white ${FONT}`}>
      <div className="flex w-[447px] shrink-0 flex-col">
        <Workbench />
        <div className="ml-[5px] h-[8px] w-[434px] shrink-0 bg-[#f4f3f9]" />
        <Detail c={LOW_DETAIL}>
          <a className="mt-[5px] text-[14.8px] leading-[25px] text-[#1a80ee]">+请添加标注位置</a>
        </Detail>
        <div className="mt-[92px] ml-[5px] flex h-[26px] w-[433px] items-center justify-center rounded-b bg-[#f1f0f5] pt-[4px] pr-[5px]">
          <div className="h-[5px] w-[156px] rounded-full bg-black" />
        </div>
      </div>

      <div className="flex w-[437px] shrink-0 flex-col">
        <StoreList />
        <div className="mt-[5px] flex">
          <div className="relative ml-px h-[398px] w-[402px] overflow-hidden">
            <CityMap viewBox="11 -47 1206 1194" className="h-[398px] w-[402px]" />
            <LocateButton className="top-[186px] left-[13px]" />
            <ZoomControl className="top-[148px] left-[386px]" />
            <LocationCard address="上海市虹口区西安路与商丘路交叉口南60米" className="top-[236.5px] left-[12.5px]" />
            <div className="absolute top-[2px] left-[163px] flex h-[85px] w-[110px] flex-col items-center rounded-[10px] bg-[#333]/65 text-[13.4px] text-white">
              <svg viewBox="0 0 40 50" className="mt-px h-[50px] w-[40px]">
                <path d="M20 33L8 21Q4 14 8 6Q14 -1 20 0Q26 -1 32 6Q36 14 32 21Z" fill="#d65a05" />
                <path d="M14 5H26L28 11H12ZM14 13H26V18H14Z" fill="#eac9b0" />
                <g strokeWidth="2.400" strokeLinecap="round">
                  <path d="M20 22V28M12 24L15 29.500M28 24L25 29.500" stroke="#f6f2ee" />
                  <path d="M31 34H26M9 34H14M30 28L26 30.500M10 28L14 30.500" stroke="#d9cfc8" />
                  <path d="M10 40L14 37.500M30 40L26 37.500M20 46V40M13 44L16 39.500M27 44L24 39.500" stroke="#a79a94" />
                </g>
              </svg>
              <span className="mt-[5px] leading-[20px]">正在加载...</span>
            </div>
          </div>
          <div className="flex flex-col">
            <div className="h-[61px] w-[8px] bg-linear-to-b from-[#8a8a8e] via-[#a08d62] to-[#99948c]" />
            <div className="h-[42px] w-[8px] bg-[#f4f4f6]" />
            <div className="mt-[134px] ml-[8px] h-[56px] w-[10px] overflow-hidden">
              <div className="-ml-[51px] h-[62px] w-[62px] rounded-full bg-[#c3c2c5]" />
            </div>
          </div>
        </div>
        <div className="mt-[10px] ml-[13px] flex h-[43px] w-[390px] shrink-0 items-center rounded-l-[12px] bg-[#0579ff] pt-[2px] pl-[192px] text-[17px] font-medium text-white">确定</div>
        <div className="flex h-[29px] w-[434px] shrink-0 items-start justify-between border-b border-[#f2f2f4] pt-[6px]">
          <div className="h-[22px] w-[12px] bg-[#f3f2f8]" />
          <div className="ml-[10px] h-[16px] flex-1 overflow-hidden"><div className="-mt-[10px] text-[17px] leading-[26px] font-medium text-[#222]">安庆吾悦</div></div>
          <div className="mt-[9px] mr-[127px] h-[6px] w-[157px] rounded-full border-x border-[#ccc]" />
          <div className="-mt-[4px] h-[26px] w-[12px] bg-[#f3f2f8]" />
        </div>
      </div>

      <div className="flex w-[433px] shrink-0 flex-col">
        <Detail c={TOP_DETAIL} nav>
          <p className="text-[12.85px] leading-[24px] whitespace-nowrap text-[#9195a0]">上海市上海市虹口区东长治路双狮汇大厦A座</p>
          <svg viewBox="0 0 14 14" fill="none" stroke="#1a80ee" strokeWidth="1.200" className="h-[13px] w-[14px]">
            <path d="M1 13L1.500 9.500L9.500 1.200Q10.500 .5 11.500 1.300L12 1.800Q13 2.800 12 3.800L4.200 12ZM8 3L10.300 5.200M7.500 12.700H13.500M10 10.500H13.500" />
          </svg>
        </Detail>
        <CityMap viewBox="40 20 1257 12" className="mt-[11px] h-[4px] w-[419px] opacity-70" labels={false} />
        <div className="h-[3px]" />
        <AddressForm />
      </div>

      <div className="flex w-[428px] shrink-0 flex-col">
        <div className="h-[6px] bg-[#f0f0f4]" />
        <div className="relative h-[377px] w-[428px] overflow-hidden">
          <CityMap viewBox="21 18 1284 1131" className="h-[377px] w-[428px]" pins />
          <LocateButton className="top-[165px] left-[9px]" />
          <ZoomControl className="top-[127px] left-[383px]" />
          <LocationCard address="上海市上海市虹口区东长治路双狮汇大厦A座" className="top-[215.5px] left-[9px]" />
        </div>
        <div className="flex gap-[12px] pt-[10px] pl-[9px] text-[17px] font-medium">
          <div className="flex h-[43px] w-[200px] items-center justify-center rounded-[10px] bg-[#0579ff] pt-px pr-px text-white">确定</div>
          <div className="flex h-[43px] w-[199px] items-center justify-center rounded-[10px] bg-[#e9e8ed] pt-px font-normal text-[#7a7e86]">清空标注</div>
        </div>
        <CityMap viewBox="40 104 1269 6" className="mt-[9px] ml-[5px] h-[2px] w-[423px] brightness-75" pins labels={false} />
        <p className="mt-[88px] ml-[36px] w-[374px] text-[19.5px] leading-[34.8px] font-bold text-[#ed1c24]">
          拜访提示位置错误，优先检查，初始的定位是否正确，若初始定位本身错误，那么异常是必然的
        </p>
      </div>

      <div className="absolute top-[740px] left-0 h-[205px] w-[3px] bg-[#f3f3f7]" />
      <div className="absolute top-[45px] left-[1315px] h-[361px] w-[2px] overflow-hidden">
        <CityMap viewBox="60 18 6 1131" className="h-[361px] w-[2px] brightness-75" labels={false} />
      </div>
      <div className="absolute top-[672px] left-[1313px] h-[35px] w-px bg-[#cfcfd3]" />
      <Assistive className="absolute top-[629px] left-[1240px] h-[64px] w-[64px]" />
      <Annotations />
    </main>
  );
}
